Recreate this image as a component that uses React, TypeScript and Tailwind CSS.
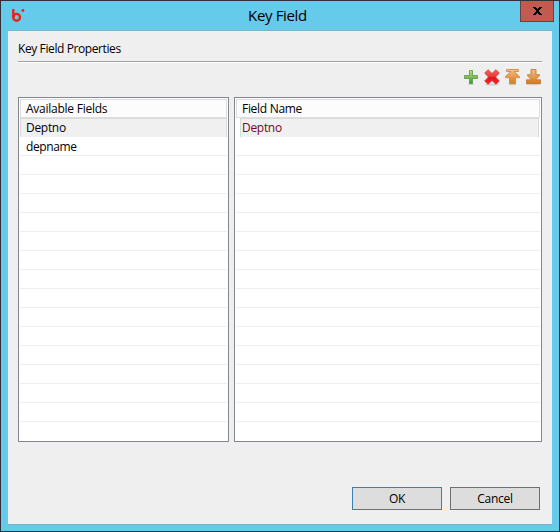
const emptyRows = Array.from({ length: 16 }, (_, i) => i);

function Logo() {
  return (
    <svg className="absolute left-[11px] top-[8px]" width="15" height="15" viewBox="0 0 15 15">
      <path d="M1.3 0V9" stroke="#e32619" strokeWidth="2.4" fill="none" />
      <circle cx="4.6" cy="8.3" r="3.4" stroke="#e32619" strokeWidth="2.4" fill="none" />
      <circle cx="10.9" cy="1.5" r="1.4" fill="#e32619" />
    </svg>
  );
}

function Toolbar() {
  return (
    <div className="flex h-[18px] justify-end gap-[5px]">
      <svg width="16" height="18" viewBox="0 0 16 18">
        <defs>
          <linearGradient id="green" x1="0" y1="0" x2="0" y2="1"><stop stopColor="#b6dd83" /><stop offset=".5" stopColor="#80bd57" /><stop offset="1" stopColor="#3d8d3c" /></linearGradient>
          <linearGradient id="red" x1="0" y1="0" x2="0" y2="1"><stop stopColor="#ee6b63" /><stop offset=".48" stopColor="#e83636" /><stop offset=".52" stopColor="#e5131c" /><stop offset="1" stopColor="#f0292b" /></linearGradient>
          <linearGradient id="orange" x1="0" y1="0" x2="0" y2="1"><stop stopColor="#f6bd7c" /><stop offset="1" stopColor="#d37b20" /></linearGradient>
        </defs>
        <ellipse cx="8" cy="15" rx="3" ry="1" fill="#c8c8c8" />
        <path d="M6.5 1.5h3v5h5v3h-5v5h-3v-5h-5v-3h5z" fill="url(#green)" stroke="#59984b" strokeWidth=".8" />
      </svg>
      <svg width="16" height="18" viewBox="0 0 16 18">
        <ellipse cx="8" cy="15.5" rx="7" ry="1" fill="#d2d2d2" />
        <path d="M4 .7 8 4.5 12 .7 15.3 4 11.5 8 15.3 12 12 15.3 8 11.5 4 15.3.7 12 4.5 8 .7 4z" fill="url(#red)" stroke="#ce3031" strokeWidth=".8" />
      </svg>
      <svg width="16" height="18" viewBox="0 0 16 18">
        <ellipse cx="7.5" cy="15.3" rx="4" ry="1" fill="#cecece" />
        <path d="M1.5.5h12v2H9.200L14.500 7.500v1.200H10.500v6h-6v-6H.5V7.500L5.800 2.500H1.500z" fill="url(#orange)" stroke="#c98542" strokeWidth=".8" />
      </svg>
      <svg width="16" height="18" viewBox="0 0 16 18">
        <ellipse cx="7.5" cy="15.3" rx="7.5" ry="1" fill="#cecece" />
        <path d="M5 .5h5v5.200h3.500v1L9.500 10.800h5v3.700H.5v-3.700h5L1.500 6.700v-1H5z" fill="url(#orange)" stroke="#bd7429" strokeWidth=".8" />
      </svg>
    </div>
  );
}

function Lines({ count }: { count: number }) {
  return <>{emptyRows.slice(0, count).map((i) => <div key={i} className="h-[19px] shrink-0 border-b border-[#efefef]" />)}</>;
}

export default function App() {
  return (
    <div className="flex h-[532px] w-[560px] flex-col border border-[#303038] bg-[#66caea] font-['Open_Sans','Noto_Sans',sans-serif] text-[12px] leading-[18px] tracking-[-0.3px] text-black">
      <header className="relative flex h-[29px] shrink-0 justify-center">
        <Logo />
        <h1 className="-ml-[5px] mt-[4px] text-[15px] leading-[20px] tracking-[-0.35px]">Key Field</h1>
        <button aria-label="Close" className="absolute right-[5px] top-0 flex h-[21px] w-[34px] items-center justify-center border border-t-0 border-[#6c4142] bg-[#c35a50]">
          <svg width="9" height="8" viewBox="0 0 9 8" shapeRendering="crispEdges"><path d="M0 0h3v1h1v1h1V1h1V0h3v1H8v1H7v1H6v2h1v1h1v1h1v1H6V7H5V6H4v1H3v1H0V7h1V6h1V5h1V3H2V2H1V1H0z" /></svg>
        </button>
      </header>
      <main className="mx-[7px] flex h-[494px] shrink-0 flex-col border-t border-[#82b4c7] bg-[#efefef] px-[10px] shadow-[0_1px_0_#7db3c8]">
        <h2 className="mt-[9px] h-[18px] whitespace-nowrap tracking-[-0.4px]">Key Field Properties</h2>
        <div className="mt-[3px] h-[2px] shrink-0 border-t border-[#a0a0a0] bg-white" />
        <div className="mt-[6px]"><Toolbar /></div>
        <div className="mt-[10px] flex h-[345px] shrink-0 gap-[5px]">
          <section className="flex w-[211px] flex-col overflow-hidden border border-[#828790] bg-white p-px">
            <div className="h-[19px] shrink-0 border border-[#dedede] bg-[#fcfcfc] pl-[5px] leading-[17px] tracking-[-0.25px]">Available Fields</div>
            <div className="h-[19px] shrink-0 border-x border-t border-[#dadada] bg-[#f0f0f0] pl-[5px] leading-[18px]">Deptno</div>
            <div className="h-[19px] shrink-0 border-b border-[#efefef] pl-[6px] leading-[20px] tracking-[-0.4px]">depname</div>
            <Lines count={14} />
          </section>
          <section className="flex w-[308px] flex-col overflow-hidden border border-[#828790] bg-white p-px">
            <div className="h-[19px] shrink-0 border border-[#dedede] bg-[#fcfcfc] pl-[5px] leading-[17px]">Field Name</div>
            <div className="ml-[4px] mr-px h-[19px] shrink-0 border-x border-t border-[#dadada] bg-[#f0f0f0] pl-px leading-[18px] text-[#80001c]">Deptno</div>
            <Lines count={15} />
          </section>
        </div>
        <footer className="mt-[45px] flex justify-end gap-[8px] pr-[2px]">
          <button className="h-[23px] w-[90px] border border-[#3c7fb1] bg-[#dddddd] leading-[21px]">OK</button>
          <button className="h-[23px] w-[90px] border border-[#707070] bg-[#dddddd] leading-[21px]">Cancel</button>
        </footer>
      </main>
    </div>
  );
}
